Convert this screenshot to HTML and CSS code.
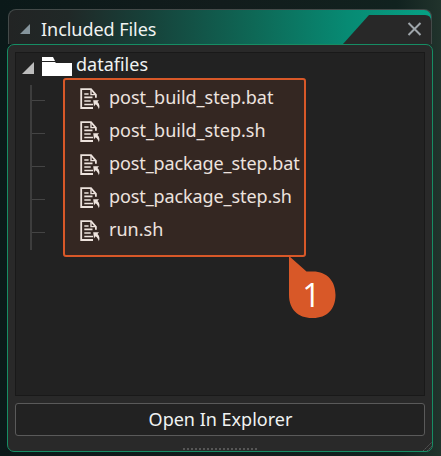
FILE: index.html
```html
<!DOCTYPE html>
<html lang="en">
<head>
<meta charset="utf-8">
<title>Included Files</title>
<link rel="stylesheet" href="styles.css">
</head>
<body>
<svg width="0" height="0" class="defs" aria-hidden="true">
  <symbol id="file" viewBox="0 0 20 22">
    <path d="M15.9 9.7V6.8L11 1.2H1.2V20H13" fill="none" stroke="currentColor" stroke-width="1.8"/>
    <path d="M11 1.2V6.6H16" fill="none" stroke="currentColor" stroke-width="1.4"/>
    <path d="M4.3 6H8.6M4.3 9.4H12.500M4.3 13H10.7M4.3 16.5H13" fill="none" stroke="currentColor" stroke-width="1.7"/>
    <path d="M13.2 12.2H19L17.500 13.900C19.500 15.900 20 18.500 18.900 21.300C18.400 19.200 17.200 17.800 15.700 16.300L14 18.200Z" fill="currentColor"/>
  </symbol>
</svg>
<div class="window">
  <header class="title-bar">
    <svg class="collapse" width="10" height="10"><path d="M10 0V10H0Z"/></svg>
    <h1>Included Files</h1>
    <div class="tab-end">
      <svg width="88" height="29"><path class="tab-shape" d="M0 29L26 0H82Q88 0 88 6V29Z"/><path class="cross" d="M65.500 8L77.500 20M77.500 8L65.500 20"/></svg>
    </div>
  </header>
  <main class="panel">
    <section class="tree">
      <div class="folder">
        <svg class="expander" width="12" height="12"><path d="M12 0V12H0Z"/></svg>
        <svg class="folder-icon" width="30" height="19"><path d="M0 0H11L13 4H0ZM0 5H13L14 6H30V19H0Z"/></svg>
        <span>datafiles</span>
      </div>
      <ul class="files">
        <li><svg><use href="#file"/></svg><span>post_build_step.bat</span></li>
        <li><svg><use href="#file"/></svg><span>post_build_step.sh</span></li>
        <li><svg><use href="#file"/></svg><span class="long">post_package_step.bat</span></li>
        <li><svg><use href="#file"/></svg><span class="long">post_package_step.sh</span></li>
        <li><svg><use href="#file"/></svg><span>run.sh</span></li>
      </ul>
    </section>
    <button class="open">Open In Explorer</button>
    <svg class="grip" width="9" height="9"><path d="M0 9L9 0M4 9L9 4"/></svg>
    <div class="handle"></div>
  </main>
</div>
<div class="highlight"></div>
<div class="callout">
  <svg width="47" height="62"><path d="M0 0L17.500 15.500H24C38 15.500 46.500 25 46.500 39C46.500 53 38 62 24 62H23C9 62 0 53 0 39Z"/></svg>
  <span>1</span>
</div>
</body>
</html>
```
FILE: styles.css
```css
* { box-sizing: border-box; }
body {
  margin: 0;
  width: 441px;
  height: 456px;
  overflow: hidden;
  padding: 9px 8px 0 7px;
  background: linear-gradient(90deg, #0b1919 0%, #121c1c 50%, #11221f 90%, #21332c 100%);
  color: #f0f3f2;
  font: 18px/24px "Noto Sans", "Open Sans", sans-serif;
}
.defs { position: absolute; }
.title-bar {
  display: flex;
  align-items: center;
  height: 35px;
  margin: 0 1px;
  padding-left: 11px;
  border: 1px solid #444a49;
  border-bottom: 0;
  border-radius: 8px 8px 0 0;
  background: linear-gradient(90deg, #222424 0%, #202827 14%, #174039 32%, #0e6856 58%, #078a73 80%, #06a184 100%);
}
.collapse { fill: #85949c; margin-top: 4px; }
.title-bar h1 {
  margin: 3px 0 0 11px;
  font-size: 18px;
  font-weight: 400;
  letter-spacing: -.05px;
}
.tab-end { margin-left: auto; align-self: flex-end; height: 29px; }
.tab-end svg { display: block; }
.tab-shape { fill: #282828; }
.cross { fill: none; stroke: #9fa6ab; stroke-width: 2; }
.panel {
  position: relative;
  display: flex;
  flex-direction: column;
  gap: 8px;
  height: 408px;
  padding: 7px 7px 0;
  border: 1px solid #168d64;
  border-radius: 7px;
  background: #292929;
}
.tree {
  height: 344px;
  padding-left: 5px;
  border: 1px solid #191919;
  background: #222;
}
.folder { display: flex; height: 24px; align-items: center; }
.expander { fill: #bdbdbd; margin: 6px 8px 1px 1px; }
.folder-icon { fill: #fff; margin-top: 2px; }
.folder span { margin: -2px 0 0 4px; }
.files {
  list-style: none;
  height: 165px;
  margin: 8px 0 0 9px;
  padding: 0;
  border-left: 2px solid #3d3d3d;
}
.files li {
  display: flex;
  height: 33px;
  align-items: flex-start;
}
.files li::before {
  content: "";
  width: 13px;
  height: 1px;
  margin-top: 15px;
  background: #444;
}
.files svg { width: 20px; height: 22px; margin: 3px 0 0 35px; }
.files span { margin-left: 9px; }
.files .long { letter-spacing: -.1px; }
.open {
  flex: none;
  height: 33px;
  margin-top: -1px;
  padding: 0 0 2px 1px;
  border: 1px solid #5a5a5a;
  border-radius: 3px;
  background: #222;
  color: inherit;
  font: inherit;
}
.handle {
  position: absolute;
  left: 175px;
  bottom: 1px;
  width: 76px;
  height: 2px;
  background: repeating-linear-gradient(90deg, #565656 0 2px, transparent 2px 4px);
}
.grip {
  position: absolute;
  right: 0;
  bottom: 0;
  fill: none;
  stroke: #5a5a5a;
  stroke-dasharray: 2 1;
}
.highlight {
  position: absolute;
  left: 63px;
  top: 78px;
  width: 243px;
  height: 179px;
  border: 2px solid #d85828;
  border-radius: 3px;
  background: rgba(216, 88, 40, .1);
}
.callout { position: absolute; left: 289px; top: 256px; width: 47px; height: 62px; }
.callout svg { display: block; fill: #d85828; }
.callout span {
  position: absolute;
  left: 0;
  top: 18px;
  width: 45px;
  text-align: center;
  color: #fff;
  font: 32px/42px "Open Sans", sans-serif;
}
```
